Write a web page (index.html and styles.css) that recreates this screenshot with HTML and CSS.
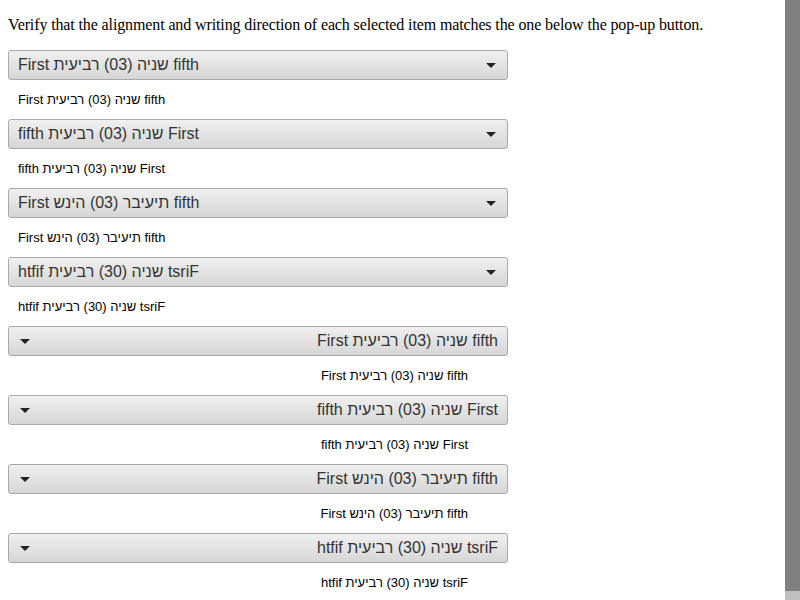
FILE: index.html
```html
<!DOCTYPE html>
<html>
<head>
<meta charset="utf-8">
<link rel="stylesheet" href="styles.css">
</head>
<body>
<p class="intro">Verify that the alignment and writing direction of each selected item matches the one below the pop-up button.</p>

<div class="group">
  <div class="popup"><span class="label ltr">First שניה (03) רביעית fifth</span><span class="arrow"></span></div>
  <div class="ref"><span class="ltr">First שניה (03) רביעית fifth</span></div>
  <div class="popup"><span class="label rtl">First שניה (03) רביעית fifth</span><span class="arrow"></span></div>
  <div class="ref"><span class="rtl">First שניה (03) רביעית fifth</span></div>
  <div class="popup"><span class="label lro">First שניה (03) רביעית fifth</span><span class="arrow"></span></div>
  <div class="ref"><span class="lro">First שניה (03) רביעית fifth</span></div>
  <div class="popup"><span class="label rlo">First שניה (03) רביעית fifth</span><span class="arrow"></span></div>
  <div class="ref"><span class="rlo">First שניה (03) רביעית fifth</span></div>
</div>

<div class="group right">
  <div class="popup"><span class="label ltr">First שניה (03) רביעית fifth</span><span class="arrow"></span></div>
  <div class="ref"><span class="ltr">First שניה (03) רביעית fifth</span></div>
  <div class="popup"><span class="label rtl">First שניה (03) רביעית fifth</span><span class="arrow"></span></div>
  <div class="ref"><span class="rtl">First שניה (03) רביעית fifth</span></div>
  <div class="popup"><span class="label lro">First שניה (03) רביעית fifth</span><span class="arrow"></span></div>
  <div class="ref"><span class="lro">First שניה (03) רביעית fifth</span></div>
  <div class="popup"><span class="label rlo">First שניה (03) רביעית fifth</span><span class="arrow"></span></div>
  <div class="ref"><span class="rlo">First שניה (03) רביעית fifth</span></div>
</div>

<div class="scrollbar"><div class="thumb"></div></div>
</body>
</html>
```

FILE: styles.css
```css
html {
  background: #ffffff;
}
body {
  margin: 0 8px 8px 8px;
  padding: 0;
  font-family: "Liberation Serif", "Times New Roman", serif;
  font-size: 16px;
  color: #000;
}
.intro {
  margin: 16px 0;
  line-height: 18px;
  letter-spacing: -0.12px;
  white-space: nowrap;
}
.popup {
  box-sizing: border-box;
  width: 500px;
  height: 30px;
  display: flex;
  align-items: center;
  justify-content: space-between;
  padding: 0 11px 0 9px;
  border: 1px solid #a9a9a9;
  border-radius: 3px;
  background: linear-gradient(#f0f0f0, #d6d6d6);
  font-family: "Liberation Sans", Arial, sans-serif;
  font-size: 16px;
  color: #333333;
  white-space: nowrap;
}
.group.right .popup {
  direction: rtl;
  padding: 0 9px 0 11px;
}
.label {
  display: block;
  line-height: 20px;
}
.arrow {
  width: 0;
  height: 0;
  border-left: 5px solid transparent;
  border-right: 5px solid transparent;
  border-top: 5px solid #222222;
}
.ref {
  width: 450px;
  padding: 0 10px;
  height: 39px;
  display: flex;
  align-items: center;
  font-family: "Liberation Sans", Arial, sans-serif;
  font-size: 13px;
  white-space: nowrap;
}
.group.right .ref {
  direction: rtl;
}
.ref > span {
  display: block;
}
.ltr {
  direction: ltr;
  unicode-bidi: embed;
}
.rtl {
  direction: rtl;
  unicode-bidi: embed;
}
.lro {
  direction: ltr;
  unicode-bidi: bidi-override;
}
.rlo {
  direction: rtl;
  unicode-bidi: bidi-override;
}
.scrollbar {
  position: fixed;
  top: 0;
  right: 0;
  width: 15px;
  height: 600px;
  background: #c0c0c0;
}
.thumb {
  height: 591px;
  background: #808080;
}
```
